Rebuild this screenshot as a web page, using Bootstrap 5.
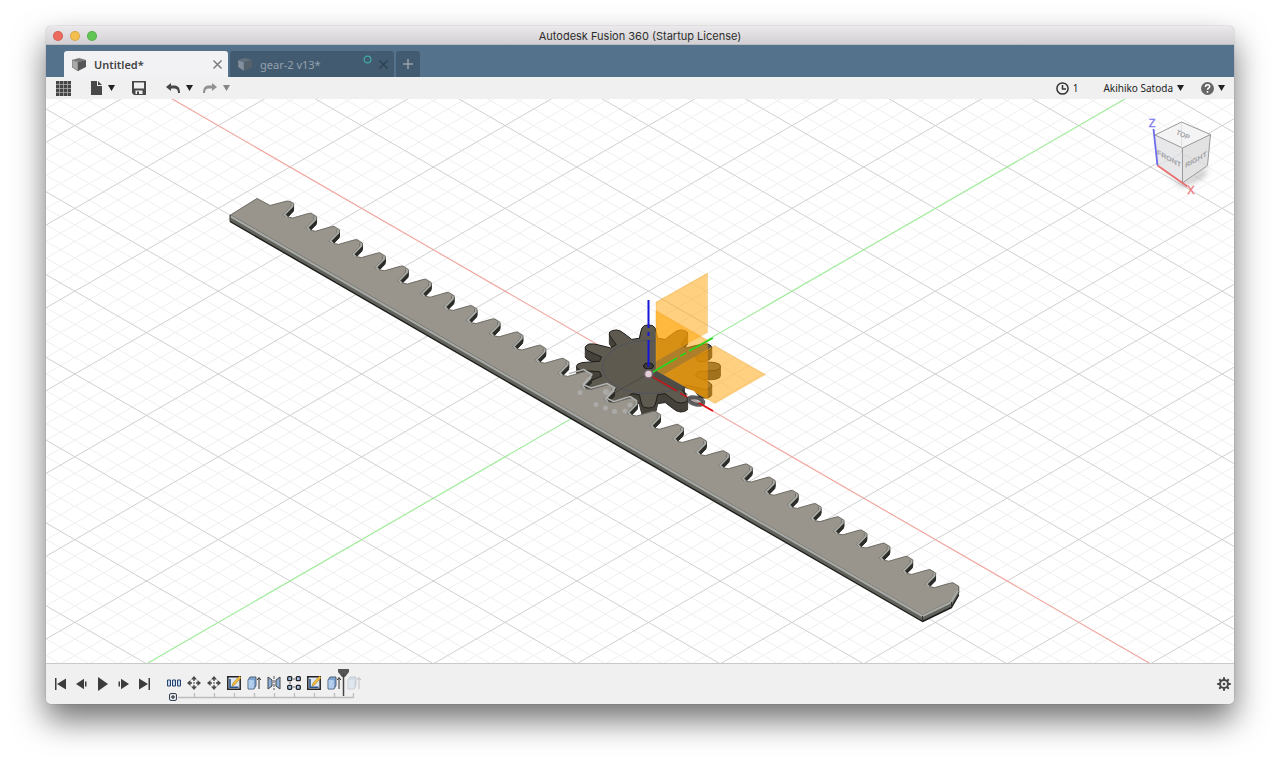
<!DOCTYPE html>
<html lang="en">
<head>
<meta charset="utf-8">
<meta name="viewport" content="width=device-width, initial-scale=1">
<title>Autodesk Fusion 360 (Startup License)</title>
<link href="https://cdn.jsdelivr.net/npm/bootstrap@5.3.0/dist/css/bootstrap.min.css" rel="stylesheet">
<style>
  body { font-family: "Open Sans", "Noto Sans", sans-serif; font-size: 10px; line-height: 16px; color: #333; background: #fff; padding: 26px 46px 67px; }
  svg { display: block; }
  button { background: none; border: 0; padding: 0; color: inherit; display: flex; align-items: center; }
  .app-window { border-radius: 5px; background: #f0f0f0; box-shadow: 0 0 1px rgba(0,0,0,.5), 0 16px 32px rgba(0,0,0,.56); min-height: 0; }
  .app-inner { border-radius: 5px; min-height: 0; }
  .title-bar { height: 19px; background: linear-gradient(#ebe9eb, #d2d0d2); border-bottom: 1px solid #b9bcc0; padding: 1px 7px 0; display: grid; grid-template-columns: 1fr auto 1fr; }
  .title-bar h1 { font: 11px/18px "Inter", sans-serif; color: #2d2d2d; }
  .lights { gap: 7px; }
  .light { width: 10px; height: 10px; border-radius: 50%; border: 1px solid rgba(0,0,0,.12); }
  .light-close { background: #ee6a5f; } .light-min { background: #f5bf50; } .light-max { background: #61c554; }
  .tab-strip { height: 32px; background: #55728c; padding: 6px 18px 0; gap: 2px; }
  .doc-tab { width: 164px; height: 26px; border-radius: 3px 3px 0 0; background: #435b71; color: #95a1ac; padding: 1px 6px 0 8px; font: 11px/24px "Noto Sans", sans-serif; }
  .doc-tab.current { background: #f2f2f4; color: #444; font-weight: 600; }
  .doc-tab .tab-name { font-weight: inherit; }
  .sync-dot { margin: 3px 7px 0 0; }
  .tab-add { width: 24px; height: 26px; border-radius: 3px 3px 0 0; background: #435b71; color: #95a1ac; justify-content: center; }
  .tool-bar { height: 22px; background: #f0f0f0; padding: 0 9px 0 10px; color: #444; }
  .tool-bar .tools button { gap: 6px; }
  .account { font: 10px/16px "Noto Sans", sans-serif; color: #222; }
  .account button { gap: 4px; }
  .canvas { background: #fff; min-height: 0; }
  .view-cube { position: absolute; top: 14px; right: 14px; }
  .timeline { height: 41px; border-top: 1px solid #c9c9c9; background: #f0f0f0; color: #444; padding: 0 3px 0 8px; }
  .transport button { width: 13px; height: 16px; justify-content: center; }
  .transport { gap: 8px; margin-right: 13px; }
  .features { padding-top: 8px; }
  .features button { width: 20px; height: 16px; justify-content: center; }
  .marker { position: absolute; left: 174px; top: 2px; }
</style>
</head>
<body class="vh-100 d-flex flex-column">
<div class="app-window flex-grow-1 d-flex flex-column">
<div class="app-inner flex-grow-1 d-flex flex-column overflow-hidden">

  <header class="title-bar align-items-center flex-shrink-0">
    <div class="lights d-flex align-items-center">
      <button class="light light-close" aria-label="Close"></button>
      <button class="light light-min" aria-label="Minimize"></button>
      <button class="light light-max" aria-label="Zoom"></button>
    </div>
    <h1 class="m-0">Autodesk Fusion 360 (Startup License)</h1>
    <span></span>
  </header>

  <nav class="tab-strip d-flex flex-shrink-0" aria-label="Documents">
    <div class="doc-tab current d-flex align-items-center">
      <svg width="14" height="13" viewBox="0 0 14 13"><path d="M0 2 7 0l7 2-7 2z" fill="#777"/><path d="M0 2l6 2v9L0 9z" fill="#a9a9a9" stroke="#666" stroke-width=".6"/><path d="M6 4l8-2v7l-8 4z" fill="#555"/></svg>
      <button class="tab-name flex-grow-1 ms-2">Untitled*</button>
      <button aria-label="Close Untitled"><svg width="9" height="9" viewBox="0 0 9 9"><path d="M.5.5l8 8m0-8l-8 8" stroke="#777" stroke-width="1.4"/></svg></button>
    </div>
    <div class="doc-tab d-flex align-items-center">
      <svg width="14" height="13" viewBox="0 0 14 13"><path d="M0 2 7 0l7 2-7 2z" fill="#65727e"/><path d="M0 2l6 2v9L0 9z" fill="#8290a0" stroke="#5a6874" stroke-width=".6"/><path d="M6 4l8-2v7l-8 4z" fill="#55616d"/></svg>
      <button class="tab-name flex-grow-1 ms-2">gear-2 v13*</button>
      <svg class="sync-dot align-self-start" width="9" height="9" viewBox="0 0 9 9"><circle cx="4.5" cy="4.5" r="3.4" fill="none" stroke="#41a8a0" stroke-width="1.3"/></svg>
      <button aria-label="Close gear-2"><svg width="9" height="9" viewBox="0 0 9 9"><path d="M.5.5l8 8m0-8l-8 8" stroke="#2f404f" stroke-width="1.4"/></svg></button>
    </div>
    <button class="tab-add" aria-label="New document"><svg width="10" height="10" viewBox="0 0 10 10"><path d="M5 0v10M0 5h10" stroke="#95a1ac" stroke-width="1.5"/></svg></button>
  </nav>

  <div class="tool-bar d-flex align-items-center flex-shrink-0">
    <div class="tools d-flex align-items-center">
      <button aria-label="Data panel" style="margin-right:20px"><svg width="15" height="15" viewBox="0 0 15 15"><path d="M0 0h15v15H0z" fill="#b5b5b5"/><path fill="#454545" d="M0 0h3.300v3.300H0zM4 0h3.300v3.300H4zM8 0h3.300v3.300H8zM12 0h3v3.300h-3zM0 4h3.300v3.300H0zM4 4h3.300v3.300H4zM8 4h3.300v3.300H8zM12 4h3v3.300h-3zM0 8h3.300v3.300H0zM4 8h3.300v3.300H4zM8 8h3.300v3.300H8zM12 8h3v3.300h-3zM0 12h3.300v3H0zM4 12h3.300v3H4zM8 12h3.300v3H8zM12 12h3v3h-3z"/></svg></button>
      <button aria-label="File" style="margin-right:17px"><svg width="11" height="14" viewBox="0 0 11 14"><path fill="#484848" d="M0 0h6v5h5v9H0zM7 0l4 4H7z"/></svg><svg width="7" height="6" viewBox="0 0 7 6"><path d="M0 0h7L3.500 6z" fill="#222"/></svg></button>
      <button aria-label="Save" style="margin-right:20px"><svg width="14" height="14" viewBox="0 0 14 14"><path fill="#484848" fill-rule="evenodd" d="M0 0h14v14H2l-2-2zM2 1.500v6h10v-6zM3.500 9.500v3.500h7V9.500zM5 10.500h2v2.500H5z"/></svg></button>
      <button aria-label="Undo" style="margin-right:10px"><svg width="14" height="10" viewBox="0 0 14 10"><path fill="#484848" d="M0 4 5 0v2.600h3c4 0 6 2.400 6 7.400h-2c0-3-1-4.600-4-4.600H5V8z"/></svg><svg width="7" height="6" viewBox="0 0 7 6"><path d="M0 0h7L3.500 6z" fill="#222"/></svg></button>
      <button aria-label="Redo"><svg width="14" height="10" viewBox="0 0 14 10"><path fill="#929292" d="M14 4 9 0v2.600H6c-4 0-6 2.400-6 7.400h2c0-3 1-4.600 4-4.600h3V8z"/></svg><svg width="7" height="6" viewBox="0 0 7 6"><path d="M0 0h7L3.500 6z" fill="#858585"/></svg></button>
    </div>
    <div class="ms-auto d-flex align-items-center account">
      <button aria-label="Job status: 1" style="margin-right:25px"><svg width="13" height="13" viewBox="0 0 13 13"><circle cx="6.5" cy="6.5" r="5.6" fill="none" stroke="#333" stroke-width="1.5"/><path d="M6.500 3v4H10" fill="none" stroke="#333" stroke-width="1.500"/></svg>1</button>
      <button style="margin-right:17px">Akihiko Satoda<svg width="7" height="6" viewBox="0 0 7 6"><path d="M0 0h7L3.500 6z" fill="#222"/></svg></button>
      <button aria-label="Help"><svg width="13" height="13" viewBox="0 0 13 13"><circle cx="6.5" cy="6.5" r="6.5" fill="#666"/><path d="M4.400 5c0-3 4.300-3 4.300-.4 0 1.500-2.200 1.500-2.200 3.200M6.500 9v1.700" fill="none" stroke="#fff" stroke-width="1.500"/></svg><svg width="7" height="6" viewBox="0 0 7 6"><path d="M0 0h7L3.500 6z" fill="#222"/></svg></button>
    </div>
  </div>

  <main class="canvas flex-grow-1 position-relative overflow-hidden">
    <svg class="w-100 h-100" viewBox="46 99 1188 564" preserveAspectRatio="xMidYMid slice" role="img" aria-label="Rack and pinion model">
      <path id="gridMinor" fill="none" stroke="#efefef" stroke-width="1"/>
      <path id="gridMajor" fill="none" stroke="#d0d0d0" stroke-width="1"/>
      <path d="M46 26.100 1234 712" stroke="#f0a8a0" stroke-width="1.200"/>
      <path d="M46 721.900 1234 36" stroke="#a0eb9b" stroke-width="1.200"/>
      <g id="gear" stroke-linejoin="round"></g>
      <ellipse cx="648.500" cy="367" rx="46" ry="26.500" fill="none" stroke="#4c5262" stroke-width=".8"/>
      <path d="M648 374 600 401" stroke="#48443d" stroke-width=".8"/>
      <ellipse cx="648.500" cy="366" rx="5" ry="3" fill="#3e3b35" stroke="#111" stroke-width="1"/>
      <g id="rack" stroke-linejoin="round"></g>
      <g fill="#b9bcc0" fill-opacity=".55"><circle cx="580" cy="392.500" r="2.500"/><circle cx="596" cy="404.500" r="2.500"/><circle cx="605.500" cy="408" r="2.500"/><circle cx="606" cy="392" r="3"/><circle cx="614.500" cy="411.500" r="2.500"/><circle cx="625" cy="411" r="2.500"/><circle cx="630" cy="405" r="2.500"/></g>
      <g fill="#ffa200" fill-opacity=".5" stroke="#e8a030" stroke-opacity=".4" stroke-width=".6">
        <path d="M656 302 707.500 273v59.500L656 361z"/>
        <path d="M656 310.500 707.500 340v59.500L656 370.500z"/>
        <path d="M664 374.500 714.500 345.500 765.500 374.500 715 403.500z"/>
      </g>
      <path d="M656 371 686 388 676 392 650 377z" fill="#4f4b45"/>
      <path d="M685 388l9 3 5 6-10-1-4-4z" fill="#fff"/>
      <ellipse cx="696" cy="401" rx="7.500" ry="3.500" fill="#777" fill-opacity=".5" stroke="#3c3c3c" stroke-opacity=".8" stroke-width="4" transform="rotate(14 696 401)"/>
      <path d="M648.500 300v28m0 4v4m0 4v27" stroke="#1616d8" stroke-width="2"/>
      <path d="M653 372l24-14m3-2 6-3m3-2 24-13" stroke="#22d81c" stroke-width="1.600"/>
      <path d="M653 377l24 14m3 2 7 4" stroke="#c01c20" stroke-width="1.500"/>
      <path d="M699 403l14 8" stroke="#e01018" stroke-width="2"/>
      <circle cx="648.500" cy="374" r="4" fill="#e5cfd8" stroke="#73656b" stroke-width="1.500"/>
    </svg>

    <svg class="view-cube" width="76" height="84" viewBox="1144 113 76 84" role="img" aria-label="View cube">
      <defs><filter id="soft" x="-30%" y="-30%" width="160%" height="160%"><feGaussianBlur stdDeviation="3"/></filter></defs>
      <path d="M1160 166l22 18 26-16-4 8-22 11z" fill="#000" fill-opacity=".35" filter="url(#soft)"/>
      <path d="M1155 135l26.500-13 29 12.500-28 13.500z" fill="#f4f4f5"/>
      <path d="M1155 135l27.500 13v35l-25-17.500z" fill="#e8e8ea"/>
      <path d="M1182.500 148l28-13.500-3 31-25 17.500z" fill="#e2e2e3"/>
      <path d="M1155 135l26.500-13 29 12.500-28 13.500zM1182.500 148v35l25-17.500 3-31" fill="none" stroke="#999" stroke-width="1"/>
      <path d="M1157.500 165.500l24-12 26 12M1181.500 122v31" fill="none" stroke="#d0d0d0" stroke-width=".6"/>
      <g font-family="Liberation Sans, sans-serif" font-size="7" font-weight="700" fill="#a2a2a6" text-anchor="middle">
        <text transform="translate(1169 161) skewY(29)">FRONT</text>
        <text transform="translate(1196 162) skewY(-29)">RIGHT</text>
        <text transform="translate(1182 137) rotate(24)">TOP</text>
      </g>
      <path d="M1153.500 129l4 36.500" stroke="#6b6bea" stroke-width="1.800"/>
      <path d="M1157.500 165.500l30 21" stroke="#e87070" stroke-width="1.800"/>
      <g font-family="Liberation Sans, sans-serif" font-size="11" text-anchor="middle"><text x="1152" y="127" fill="#7c7cee" stroke="#7c7cee" stroke-width=".4">Z</text><text x="1191" y="194" fill="#f07878" stroke="#f07878" stroke-width=".4">X</text></g>
    </svg>
  </main>

  <footer class="timeline d-flex align-items-center flex-shrink-0">
    <div class="transport d-flex" role="group" aria-label="Playback">
      <button aria-label="Go to start"><svg width="11" height="12" viewBox="0 0 11 12"><path d="M0 0h1.500v12H0zM11 .5v11L2 6z" fill="#3c3c3c"/></svg></button>
      <button aria-label="Step back"><svg width="11" height="12" viewBox="0 0 11 12"><path d="M8 .8v10.400L0 6zM9 3.500h1.500v5H9z" fill="#3c3c3c"/></svg></button>
      <button aria-label="Play"><svg width="10" height="14" viewBox="0 0 10 14"><path d="M0 0l10 7-10 7z" fill="#3c3c3c"/></svg></button>
      <button aria-label="Step forward"><svg width="11" height="12" viewBox="0 0 11 12"><path d="M3 .8v10.400L11 6zM.5 3.500H2v5H.5z" fill="#3c3c3c"/></svg></button>
      <button aria-label="Go to end"><svg width="11" height="12" viewBox="0 0 11 12"><path d="M9.500 0H11v12H9.500zM0 .5v11L9 6z" fill="#3c3c3c"/></svg></button>
    </div>
    <div class="features position-relative">
      <svg width="0" height="0" class="position-absolute"><defs>
        <g id="moveIcon" fill="#484848"><path d="M7 0l3 3.500H4zM7 14l3-3.500H4zM0 7l3.500-3v6zM14 7l-3.500-3v6z"/><path d="M6.300 2h1.400v3H6.300zM6.300 9h1.400v3H6.300zM2 6.300h3v1.400H2zM9 6.300h3v1.400H9z"/><path d="M6 6h2v2H6z" fill="#999"/></g>
        <g id="sketchIcon"><path d="M.8.800h12.400v12.400H.8z" fill="#dfe8f2" stroke="#222" stroke-width="1.500"/><path d="M3 3v8.300h8.500" fill="none" stroke="#2c5587" stroke-width="1.600"/><path d="M5 10l1-3 6.500-7L14 2 7.500 9z" fill="#f2bd3c" stroke="#a0741b" stroke-width=".5"/></g>
        <g id="extrudeIcon"><path d="M1 4l2-3h6v8.500L7 13H1z" fill="#7fa4d0" stroke="#46566b" stroke-width=".9"/><path d="M1.500 4h5.300v8.500H1.500z" fill="#b4cfee"/><path d="M12 13V2m-1.800 2L12 1.500 13.800 4" fill="none" stroke="#333" stroke-width="1"/></g>
      </defs></svg>
      <div class="d-flex">
        <button aria-label="Component pattern"><svg width="14" height="14" viewBox="0 0 14 14"><path d="M.5 4h3v6h-3zM5.500 4h3v6h-3zM10.500 4h3v6h-3z" fill="#c5d8ee" stroke="#26436b"/></svg></button>
        <button aria-label="Move"><svg width="14" height="14" viewBox="0 0 14 14"><use href="#moveIcon"/></svg></button>
        <button aria-label="Move"><svg width="14" height="14" viewBox="0 0 14 14"><use href="#moveIcon"/></svg></button>
        <button aria-label="Sketch"><svg width="14" height="14" viewBox="0 0 14 14"><use href="#sketchIcon"/></svg></button>
        <button aria-label="Extrude"><svg width="14" height="14" viewBox="0 0 14 14"><use href="#extrudeIcon"/></svg></button>
        <button aria-label="Mirror"><svg width="14" height="14" viewBox="0 0 14 14"><path d="M1 1l4 3v6l-4 3zM13 1L9 4v6l4 3z" fill="#8fb2db" stroke="#444"/><path d="M7 0v14" stroke="#555" stroke-dasharray="3 1"/></svg></button>
        <button aria-label="Pattern"><svg width="14" height="14" viewBox="0 0 14 14"><path d="M3 3h8M3 11h8M3 3v8" stroke="#666" stroke-dasharray="2 1"/><g fill="#a9c6e8" stroke="#222" stroke-width="1.300"><rect x=".7" y=".7" width="4" height="4" rx="1"/><rect x="9.300" y=".7" width="4" height="4" rx="1"/><rect x=".7" y="9.300" width="4" height="4" rx="1"/><rect x="9.300" y="9.300" width="4" height="4" rx="1"/></g></svg></button>
        <button aria-label="Sketch"><svg width="14" height="14" viewBox="0 0 14 14"><use href="#sketchIcon"/></svg></button>
        <button aria-label="Extrude"><svg width="14" height="14" viewBox="0 0 14 14"><use href="#extrudeIcon"/></svg></button>
        <button aria-label="Extrude, rolled back" class="opacity-25"><svg width="14" height="14" viewBox="0 0 14 14"><use href="#extrudeIcon"/></svg></button>
      </div>
      <svg width="200" height="10" viewBox="0 0 200 10"><path d="M14 6.500h175.500M30.500 2v4m20-4v4m20-4v4m20-4v4m20-4v4m20-4v4m20-4v4m20-4v4M189.500 2v5" fill="none" stroke="#bdbdbd" stroke-width="1.300"/><rect x="5.500" y="2.500" width="7" height="7" rx="1.500" fill="#dfe4ec" stroke="#3a4252"/><path d="M9 4v4M7 6h4" stroke="#222"/></svg>
      <svg class="marker" width="11" height="27" viewBox="0 0 11 27"><path d="M0 0h11v3L7 8H4L0 3z" fill="#555"/><path d="M5.500 5v22" stroke="#444" stroke-width="1.500"/></svg>
    </div>
    <button class="ms-auto" aria-label="Timeline settings"><svg width="14" height="14" viewBox="-7 -7 14 14"><circle r="4" fill="none" stroke="#484848" stroke-width="2"/><circle r="1.300" fill="#484848"/><path d="M0-6.800v2.600M0 4.200v2.600M-6.800 0h2.600M4.200 0h2.600M-4.800-4.800l1.800 1.800M3 3l1.800 1.800M-4.800 4.800 -3 3M3-3l1.800-1.800" stroke="#484848" stroke-width="2"/></svg></button>
  </footer>
</div>
</div>

<script src="https://cdn.jsdelivr.net/npm/bootstrap@5.3.0/dist/js/bootstrap.bundle.min.js"></script>
<script>
  // Isometric ground grid: five minor cells to each major cell.
  const origin = { x: 648.5, y: 374 }, slope = 0.5774, step = 16.56;
  let minor = '', major = '';
  for (let k = -64; k <= 64; k++) {
    for (const s of [slope, -slope]) {
      const at = x => (origin.y + s * (x - origin.x) + k * step).toFixed(1);
      const line = `M40 ${at(40)}L1240 ${at(1240)}`;
      if (k % 5) minor += line; else if (k) major += line;
    }
  }
  document.getElementById('gridMinor').setAttribute('d', minor);
  document.getElementById('gridMajor').setAttribute('d', major);

  // A solid is its outline stacked downwards, one layer per pixel of thickness.
  function solid(d, depth, side, base, top, edge) {
    let out = '';
    for (let dy = depth; dy > 0; dy--) {
      const colour = dy === depth ? base : side;
      out += `<path d="${d}" transform="translate(0 ${dy})" fill="${colour}" stroke="${colour}" stroke-width=".8"/>`;
    }
    return out + `<path d="${d}" fill="${top}" stroke="${edge}" stroke-width="1"/>`;
  }

  // Pinion with twelve teeth, flattened to the isometric view.
  const tooth = [[49, -9], [58, -8], [67, -6.5], [71, -4], [72, 0], [71, 4], [67, 6.5], [58, 8], [49, 9]];
  const pts = [];
  for (let i = 0; i < 12; i++) {
    const a = i * Math.PI / 6;
    for (const [r, w] of tooth) {
      const x = r * Math.cos(a) - w * Math.sin(a), y = r * Math.sin(a) + w * Math.cos(a);
      pts.push((648.5 + x).toFixed(1) + ' ' + (366.5 + y * 0.577).toFixed(1));
    }
  }
  document.getElementById('gear').innerHTML = solid('M' + pts.join('L') + 'z', 9, '#45423b', '#1c1b18', '#5f5a50', '#1f1e1a');

  // Rack with thirty teeth; each tooth has a lighter chamfer down its right flank.
  let d = 'M230.5 215L257 198.5L270 205.5L287 201L290 201.5L293.7 203.5', flanks = '';
  const px = 22.93, py = 13.2;
  for (let i = 0; i < 29; i++) {
    const x = 293.7 + i * px, y = 203.5 + i * py;
    for (const [dx, dy] of [[-.5, 3], [-8.3, 11], [-5.5, 13.7], [-1, 14.5], [14.7, 10], [17.3, 9.7], [22.93, 13.2]])
      d += `L${(x + dx).toFixed(1)} ${(y + dy).toFixed(1)}`;
    flanks += `M${(x - 1.4).toFixed(1)} ${y.toFixed(1)}v3l-8 8l2.500 2.500`;
  }
  d += 'L958.5 590L951.5 601L922.5 615z';
  document.getElementById('rack').innerHTML =
    solid(d, 5, '#2e2e2a', '#1b1b19', '#99958c', '#6f6d66') +
    `<path d="${flanks}" transform="translate(-1.2 0)" fill="none" stroke="#6b6962" stroke-width="1"/>` +
    `<path d="${flanks}" fill="none" stroke="#a9aca8" stroke-width="1.600"/>` +
    '<path d="M230 214.500L922.500 614.500L951.500 601L958.700 589V595L951.500 607.500L922.500 621.500L230 221.500z" fill="#62625c"/>' +
    '<path d="M230.500 216.300L922.500 616L951 602.200L958 590.500" fill="none" stroke="#a6a9a5" stroke-width="2.200"/>' +
    '<path d="M230 221.500L922.500 621.500L951.500 607.500L958.700 595" fill="none" stroke="#1c1c1a" stroke-width="1.400"/>' +
    '<path d="M922.500 616v5.500M230 215v6.500M951.500 602v5" stroke="#33332f" stroke-width="1"/>' +
    '<path d="M568.900 373.600L583.600 369.500L592 374.500L583 384.500L591 388L607 383.500L615 388L606 398L614 401.500L630 396.500L637 401" fill="none" stroke="#b0b3b2" stroke-width="1.500"/>';
</script>
</body>
</html>
